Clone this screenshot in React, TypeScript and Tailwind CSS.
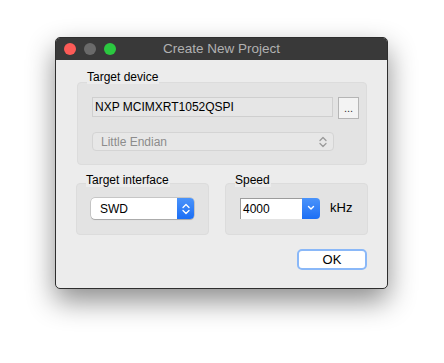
import React from "react";

const font = { fontFamily: '"Liberation Sans", Arial, sans-serif' };

function UpDown({ className }: { className: string }) {
  return (
    <svg width="8" height="12" viewBox="0 0 8 12" className={className} fill="none" stroke="currentColor" strokeWidth="1.3" strokeLinecap="round" strokeLinejoin="round">
      <path d="M1 4.5 L4 1.5 L7 4.5" />
      <path d="M1 7.5 L4 10.5 L7 7.5" />
    </svg>
  );
}

function GroupLabel({ children }: { children: React.ReactNode }) {
  return (
    <div className="relative z-10 ml-[10px] h-[14px] text-[12px] leading-[14px] text-black">
      <span className="bg-[#ececec] pr-[1px]">{children}</span>
    </div>
  );
}

export default function App() {
  return (
    <div className="h-[363px] w-[444px] bg-white pl-[55px] pt-[37px]" style={font}>
      <div className="w-[333px] overflow-hidden rounded-[5px] border border-[#2e2e2e] bg-[#ececec] shadow-[0_12px_28px_rgba(0,0,0,0.45)]">
        {/* title bar */}
        <div className="relative flex h-[22px] items-center justify-center bg-[#393939]">
          <div className="absolute left-[8px] top-[5px] flex gap-[8px]">
            <span className="size-[12px] rounded-full bg-[#fc5b57]" />
            <span className="size-[12px] rounded-full bg-[#6a6a6a]" />
            <span className="size-[12px] rounded-full bg-[#2bc840]" />
          </div>
          <span className="text-[13.5px] text-[#b1b1b1]">Create New Project</span>
        </div>

        {/* body */}
        <div className="px-[21px] pb-[18px] pt-[10px]">
          <GroupLabel>Target device</GroupLabel>
          <div className="-mt-[2px] flex h-[83px] w-[290px] flex-col gap-[13px] rounded-[4px] border border-[#dcdcdc] bg-[#e3e3e3] pl-[14px] pt-[14px]">
            <div className="flex items-start gap-[5px]">
              <div className="flex h-[20px] w-[241px] items-center border border-[#cfcfcf] bg-[#e6e6e6] pl-[2px] text-[12px] text-black">
                NXP MCIMXRT1052QSPI
              </div>
              <div className="flex h-[22px] w-[21px] items-end justify-center border border-[#b5b5b5] bg-[#f3f3f3] pb-[4px] text-[11px] leading-none text-[#333]">
                ...
              </div>
            </div>
            <div className="flex h-[19px] w-[242px] items-center justify-between rounded-[4px] border border-[#d4d4d4] bg-[#e7e7e7] pl-[8px] pr-[6px] text-[12px] text-[#8c8c8c]">
              <span>Little Endian</span>
              <UpDown className="text-[#9a9a9a]" />
            </div>
          </div>

          <div className="-ml-[1px] mt-[8px] flex gap-[16px]">
            <div>
              <GroupLabel>Target interface</GroupLabel>
              <div className="-mt-[4px] flex h-[52px] w-[133px] items-center rounded-[4px] border border-[#dcdcdc] bg-[#e3e3e3] pb-[1px] pl-[14px]">
                <div className="flex h-[21px] w-[103px] overflow-hidden rounded-[4px] bg-white shadow-[0_0_0_0.5px_rgba(0,0,0,0.25),0_1px_1px_rgba(0,0,0,0.15)]">
                  <div className="flex flex-1 items-center pl-[9px] text-[12px] text-black">SWD</div>
                  <div className="flex w-[17px] items-center justify-center bg-gradient-to-b from-[#4a93fa] to-[#1a6ef5]">
                    <UpDown className="text-white" />
                  </div>
                </div>
              </div>
            </div>
            <div>
              <GroupLabel>Speed</GroupLabel>
              <div className="-mt-[4px] flex h-[52px] w-[143px] items-center rounded-[4px] border border-[#dcdcdc] bg-[#e3e3e3] pb-[2px] pl-[14px]">
                <div className="flex h-[21px] w-[80px]">
                  <div className="flex flex-1 items-center border-l border-t border-[#9c9c9c] bg-white pl-[2px] text-[12px] text-black">4000</div>
                  <div className="flex w-[18px] items-center justify-center rounded-r-[4px] bg-gradient-to-b from-[#4a93fa] to-[#1a6ef5]">
                    <svg width="8" height="6" viewBox="0 0 8 6" fill="none" stroke="white" strokeWidth="1.4" strokeLinecap="round" strokeLinejoin="round">
                      <path d="M1.5 1.5 L4 4 L6.5 1.5" />
                    </svg>
                  </div>
                </div>
                <span className="ml-[10px] text-[13px] text-black">kHz</span>
              </div>
            </div>
          </div>

          <div className="mt-[14px] flex justify-end">
            <div className="mr-[-1px] flex h-[21px] w-[70px] items-center justify-center rounded-[5px] border-2 border-[#8ab8f8] bg-white text-[13px] text-black">
              OK
            </div>
          </div>
        </div>
      </div>
    </div>
  );
}
